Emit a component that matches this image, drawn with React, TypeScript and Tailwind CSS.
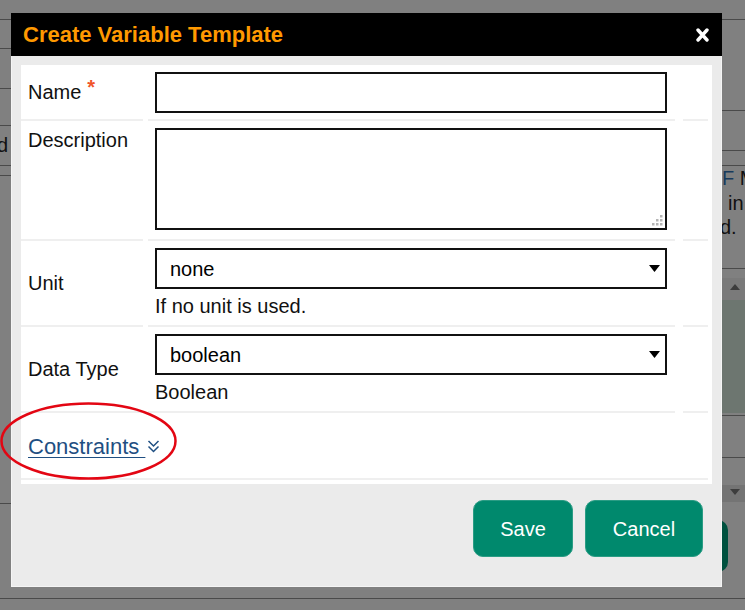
import React from 'react'

const lines = [
  { top: 19, left: 0, width: 745 },
  { top: 48, left: 0, width: 11 },
  { top: 88, left: 0, width: 11 },
  { top: 125, left: 0, width: 11 },
  { top: 165, left: 0, width: 745 },
  { top: 175, left: 0, width: 11 },
  { top: 110, left: 722, width: 23 },
  { top: 150, left: 722, width: 23 },
  { top: 268, left: 722, width: 23 },
  { top: 415, left: 722, width: 23 },
  { top: 457, left: 722, width: 23 },
  { top: 503, left: 0, width: 11 },
  { top: 598, left: 0, width: 745 },
]

// dimmed page behind the dialog, only its edges show
const Backdrop = () => (
  <>
    <div className="absolute left-[722px] top-[278px] h-[22px] w-[23px] bg-[#7a7a7a]" />
    <div className="absolute left-[722px] top-[300px] h-[113px] w-[23px] bg-[#6d7670]" />
    <div className="absolute left-[722px] top-[485px] h-[17px] w-[23px] bg-[#747474]" />
    {lines.map((l, i) => (
      <div
        key={i}
        className="absolute h-px bg-[#4a4a4a]"
        style={{ top: l.top, left: l.left, width: l.width }}
      />
    ))}
    <div className="absolute left-[-3px] top-[134px] text-[20px] leading-[23px] text-[#111]">d</div>
    <div className="absolute left-[722px] top-[167px] whitespace-nowrap text-[20px] leading-[23px] text-[#111]">
      <span className="text-[#173a5c]">F</span> M
    </div>
    <div className="absolute left-[728px] top-[192px] whitespace-nowrap text-[20px] leading-[23px] text-[#111]">in</div>
    <div className="absolute left-[720px] top-[216px] whitespace-nowrap text-[20px] leading-[23px] text-[#111]">d.</div>
    <svg className="absolute left-[730px] top-[284px]" width="10" height="6" viewBox="0 0 10 6">
      <path d="M0 6 L5 0 L10 6 Z" fill="#3d3d3d" />
    </svg>
    <svg className="absolute left-[730px] top-[489px]" width="10" height="6" viewBox="0 0 10 6">
      <path d="M0 0 L5 6 L10 0 Z" fill="#3d3d3d" />
    </svg>
    <div className="absolute left-[690px] top-[520px] h-[52px] w-[38px] rounded-[10px] bg-[#00513f]" />
  </>
)

const Caret = () => (
  <svg className="pointer-events-none absolute right-[15px] top-[17px]" width="11" height="7" viewBox="0 0 11 7">
    <path d="M0 0 L11 0 L5.5 7 Z" fill="#000" />
  </svg>
)

const Grip = () => (
  <svg className="pointer-events-none absolute bottom-[4px] right-[4px]" width="11" height="11" viewBox="0 0 11 11">
    {[
      [8, 0],
      [4, 4],
      [8, 4],
      [0, 8],
      [4, 8],
      [8, 8],
    ].map(([x, y]) => (
      <rect key={`${x}-${y}`} x={x} y={y} width="2.5" height="2.5" fill="#b5b5b5" />
    ))}
  </svg>
)

const SelectBox = ({ value }: { value: string }) => (
  <div className="relative">
    <select
      defaultValue={value}
      className="h-[41px] w-[512px] appearance-none rounded-none border-2 border-[#111] bg-white pl-[13px] text-[20px] text-black outline-none"
    >
      <option value={value}>{value}</option>
    </select>
    <Caret />
  </div>
)

const Row = ({
  label,
  height,
  top,
  children,
}: {
  label: React.ReactNode
  height: number
  top?: boolean
  children: React.ReactNode
}) => (
  <div className="flex" style={{ height }}>
    <div
      className={`flex w-[122px] border-b-2 border-[#efefef] pl-[7px] text-[20px] leading-[23px] text-[#111] ${
        top ? 'items-start pt-[8px]' : 'items-center'
      }`}
    >
      {label}
    </div>
    <div className="ml-[5px] w-[527px] border-b-2 border-[#efefef] pl-[7px] pt-[7px]">{children}</div>
    <div className="ml-[8px] w-[25px] border-b-2 border-[#efefef]" />
  </div>
)

export default function App() {
  return (
    <div className="relative h-[610px] w-[745px] overflow-hidden bg-[#808080] font-['Liberation_Sans',Arial,sans-serif]">
      <Backdrop />

      <div className="absolute left-[11px] top-[13px] flex h-[574px] w-[711px] flex-col">
        <div className="flex h-[43px] items-center justify-between bg-black pl-[12px] pr-[13px]">
          <h2 className="text-[22px] font-bold leading-none text-[#ff9900]">Create Variable Template</h2>
          <svg width="13" height="14" viewBox="0 0 13 14">
            <path d="M2 2 L11 12 M11 2 L2 12" stroke="#fff" strokeWidth="3.4" strokeLinecap="round" />
          </svg>
        </div>

        <div className="flex flex-1 flex-col border-x border-b border-[#f5f5f5] bg-[#ebebeb] px-[9px] pt-[9px]">
          <div className="w-[691px] bg-white pb-[4px]">
            <Row
              height={56}
              label={
                <>
                  Name
                  <span className="relative -top-[5px] ml-[6px] text-[20px] font-bold text-[#f0542a]">*</span>
                </>
              }
            >
              <input className="h-[41px] w-[512px] border-2 border-[#111] bg-white outline-none" />
            </Row>

            <Row height={120} top label="Description">
              <div className="relative h-[102px] w-[512px]">
                <textarea className="h-full w-full resize-none border-2 border-[#111] bg-white outline-none" />
                <Grip />
              </div>
            </Row>

            <Row height={86} label="Unit">
              <SelectBox value="none" />
              <p className="mt-[6px] text-[20px] leading-[23px] text-[#111]">If no unit is used.</p>
            </Row>

            <Row height={86} label="Data Type">
              <SelectBox value="boolean" />
              <p className="mt-[6px] text-[20px] leading-[23px] text-[#111]">Boolean</p>
            </Row>

            <div className="flex h-[67px] w-[687px] items-center border-b-2 border-[#efefef] pl-[7px] pt-[2px]">
              <a href="#" className="flex items-center text-[22px] leading-[25px] text-[#1f4f82]">
                <span className="underline decoration-1 underline-offset-[3px]">Constraints&nbsp;</span>
                <svg className="ml-[2px]" width="13" height="13" viewBox="0 0 13 13">
                  <path d="M1.5 1 L6.5 6 L11.5 1 M1.5 6.5 L6.5 11.5 L11.5 6.5" fill="none" stroke="#1f4f82" strokeWidth="1.5" />
                </svg>
              </a>
            </div>
          </div>

          <div className="mt-[16px] flex justify-end gap-[12px] pr-[9px]">
            <button className="h-[57px] w-[100px] rounded-[10px] border border-[#2a9c84] bg-[#00896d] text-[20px] text-white">
              Save
            </button>
            <button className="h-[57px] w-[118px] rounded-[10px] border border-[#2a9c84] bg-[#00896d] text-[20px] text-white">
              Cancel
            </button>
          </div>
        </div>
      </div>

      <svg className="pointer-events-none absolute left-0 top-0" width="745" height="610">
        <ellipse cx="88.5" cy="441" rx="87" ry="37.5" fill="none" stroke="#e30613" strokeWidth="2.5" />
      </svg>
    </div>
  )
}
